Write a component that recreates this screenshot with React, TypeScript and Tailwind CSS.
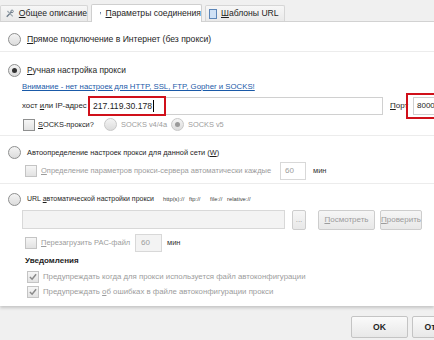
import React from 'react';

const font = { fontFamily: '"Liberation Sans", Arial, sans-serif' };

const Radio = ({ checked = false, disabled = false }: { checked?: boolean; disabled?: boolean }) => (
  <span
    className={`inline-flex h-[13px] w-[13px] shrink-0 items-center justify-center rounded-full border bg-gradient-to-b from-[#f4f4f4] to-[#dcdcdc] ${
      disabled ? 'border-[#c8c8c8]' : 'border-[#8e8f8f]'
    }`}
  >
    {checked && <span className={`h-[5px] w-[5px] rounded-full ${disabled ? 'bg-[#9a9a9a]' : 'bg-[#333]'}`} />}
  </span>
);

const Check = ({ checked = false, disabled = false }: { checked?: boolean; disabled?: boolean }) => (
  <span
    className={`inline-flex h-[12px] w-[12px] shrink-0 items-center justify-center border bg-gradient-to-b from-[#f6f6f6] to-[#e2e2e2] ${
      disabled ? 'border-[#c4c4c4]' : 'border-[#8e8f8f]'
    }`}
  >
    {checked && (
      <svg width="8" height="8" viewBox="0 0 9 9">
        <path d="M1 4.5 L3.5 7 L8 1.5" fill="none" stroke={disabled ? '#8a8a8a' : '#333'} strokeWidth="1.7" />
      </svg>
    )}
  </span>
);

const Btn = ({ children, className = '' }: { children: React.ReactNode; className?: string }) => (
  <span
    className={`inline-flex h-[20px] shrink-0 items-center justify-center rounded-[2px] border border-[#cdcdcd] bg-gradient-to-b from-[#f6f6f6] to-[#e8e8e8] text-[8px] text-[#9c9c9c] ${className}`}
  >
    {children}
  </span>
);

const U = ({ children }: { children: React.ReactNode }) => <span className="underline">{children}</span>;

export default function App() {
  return (
    <div className="h-[340px] w-[434px] overflow-hidden whitespace-nowrap bg-[#f0f0f0] text-[8px] text-[#1e1e1e]" style={font}>
      {/* tabs */}
      <div className="flex h-[22px] items-end border-b border-[#d4d4d4] text-[8.6px]">
        <div className="flex h-[16px] w-[88px] shrink-0 items-center gap-[5px] rounded-t-[2px] border border-b-0 border-[#d6d6d6] bg-gradient-to-b from-[#f7f7f7] to-[#e9e9e9] pl-[5px]">
          <svg width="11" height="11" viewBox="0 0 11 11">
            <path d="M1 10 L8 3" stroke="#6b7a88" strokeWidth="1.8" />
            <path d="M2 2 L9.5 9.5" stroke="#9aa4ac" strokeWidth="1.6" />
            <circle cx="8.5" cy="2.5" r="1.8" fill="none" stroke="#6b7a88" strokeWidth="1.2" />
          </svg>
          <span><U>О</U>бщее описание</span>
        </div>
        <div className="relative top-[1px] ml-[3px] flex h-[18px] w-[111px] shrink-0 items-center gap-[4px] rounded-t-[2px] border border-b-0 border-[#cfcfcf] bg-white pl-[8px]">
          <svg width="10" height="11" viewBox="0 0 10 11">
            <rect x="0.5" y="0.5" width="9" height="8" fill="#8ea6c4" stroke="#4f6b91" />
            <rect x="2" y="2" width="6" height="4" fill="#dfe8f3" />
            <rect x="1" y="9" width="8" height="2" fill="#6f7f90" />
          </svg>
          <span><U>П</U>араметры соединения</span>
        </div>
        <div className="ml-[3px] flex h-[16px] w-[80px] shrink-0 items-center gap-[4px] rounded-t-[2px] border border-b-0 border-[#d6d6d6] bg-gradient-to-b from-[#f7f7f7] to-[#e9e9e9] pl-[3px]">
          <svg width="8" height="10" viewBox="0 0 8 10">
            <rect x="0.5" y="0.5" width="7" height="9" fill="#cfe1f5" stroke="#5d86b8" />
          </svg>
          <span><U>Ш</U>аблоны URL</span>
        </div>
      </div>

      {/* content */}
      <div className="flex h-[284px] flex-col bg-white shadow-[0_2px_3px_rgba(0,0,0,0.18)]">
        <div className="flex h-[30px] items-end border-b border-[#ececec] pb-[5px] pl-[8px]">
          <div className="flex h-[13px] items-center gap-[6px] text-[8.6px]">
            <Radio />
            <span><U>П</U>рямое подключение в Интернет (без прокси)</span>
          </div>
        </div>

        <div className="flex h-[84px] flex-col border-b border-[#ececec] pl-[8px] pt-[12px]">
          <div className="flex h-[13px] items-center gap-[6px] text-[8.4px]">
            <Radio checked />
            <span><U>Р</U>учная настройка прокси</span>
          </div>
          <div className="mt-[3px] h-[14px] pl-[14px] text-[7.8px] leading-[14px] text-[#1a5aa8] underline">
            Внимание - нет настроек для HTTP, SSL, FTP, Gopher и SOCKS!
          </div>
          <div className="mt-[3px] flex h-[18px] items-center pl-[14px]">
            <span className="w-[66px] shrink-0 text-[7.8px]"><span>хост <U>и</U>ли IP-адрес</span></span>
            <div className="relative flex h-[18px] w-[295px] shrink-0 items-center border border-[#d0d0d0] pl-[4px] text-[8.6px]">
              217.119.30.178
              <span className="ml-[1px] h-[12px] w-[1px] bg-black" />
              <span className="absolute left-[-1px] top-[-2px] h-[20px] w-[78px] border-2 border-[#d0101a]" />
            </div>
            <span className="ml-[7px] w-[16px] shrink-0"><U>П</U>орт</span>
            <div className="relative ml-[7px] flex h-[18px] flex-1 items-center border border-r-0 border-[#d0d0d0] pl-[3px] text-[8px]">
              8000
              <span className="absolute left-[-8px] top-[-5px] h-[26px] w-[40px] border-2 border-[#d0101a]" />
            </div>
          </div>
          <div className="mt-[1px] flex h-[17px] items-center pl-[15px] text-[7.4px]">
            <Check />
            <span className="ml-[3px] w-[66px] shrink-0"><U>S</U>OCKS-прокси?</span>
            <Radio disabled />
            <span className="ml-[4px] w-[50px] shrink-0 text-[#9c9c9c]">SOCKS v4/4a</span>
            <Radio checked disabled />
            <span className="ml-[4px] text-[#9c9c9c]">SOCKS v5</span>
          </div>
        </div>

        <div className="flex h-[48px] flex-col border-b border-[#ececec] pl-[8px] pt-[10px]">
          <div className="flex h-[13px] items-center gap-[6px] text-[7.4px]">
            <Radio />
            <span>Автоопределение настроек прокси для данной сети (<U>W</U>)</span>
          </div>
          <div className="mt-[2px] flex h-[19px] items-center pl-[17px] text-[#9c9c9c]">
            <Check disabled />
            <span className="ml-[4px] w-[239px] shrink-0 text-[7.5px]"><U>О</U>пределение параметров прокси-сервера автоматически каждые</span>
            <span className="flex h-[18px] w-[26px] shrink-0 items-center border border-[#d8d8d8] pl-[4px]">60</span>
            <span className="ml-[7px] text-[7.5px] text-[#333]">мин</span>
          </div>
        </div>

        <div className="flex flex-1 flex-col pl-[8px] pt-[9px]">
          <div className="flex h-[13px] items-center">
            <Radio />
            <span className="ml-[6px] w-[136px] shrink-0 text-[7px]">URL <U>а</U>втоматической настройки прокси</span>
            <span className="text-[5.8px] text-[#444]">http(s)://&nbsp;&nbsp;&nbsp;ftp://&nbsp;&nbsp;&nbsp;&nbsp;&nbsp;&nbsp;file://&nbsp;&nbsp;&nbsp;relative://</span>
          </div>
          <div className="mt-[3px] flex h-[21px] items-center pl-[14px]">
            <span className="h-[19px] w-[263px] shrink-0 border border-[#d8d8d8] bg-[#f3f3f3]" />
            <Btn className="ml-[7px] w-[14px]">...</Btn>
            <Btn className="ml-[12px] w-[57px]"><span><U>П</U>осмотреть</span></Btn>
            <Btn className="ml-[5px] w-[42px]"><span><U>П</U>роверить</span></Btn>
          </div>
          <div className="mt-[2px] flex h-[21px] items-center pl-[17px] text-[7.5px] text-[#9c9c9c]">
            <Check disabled />
            <span className="ml-[4px] w-[94px] shrink-0"><U>П</U>ерезагрузить PAC-файл</span>
            <span className="flex h-[18px] w-[27px] shrink-0 items-center border border-[#d8d8d8] bg-[#f3f3f3] pl-[5px] text-[8px]">60</span>
            <span className="ml-[5px] text-[#333]">мин</span>
          </div>
          <div className="mt-[1px] h-[14px] pl-[17px] font-bold leading-[14px]">Уведомления</div>
          <div className="mt-[1px] flex h-[15px] items-center gap-[4px] pl-[19px] text-[7.8px] text-[#9c9c9c]">
            <Check checked disabled />
            <span>Предупреждать когда для прокси используется файл автоконфигурации</span>
          </div>
          <div className="flex h-[15px] items-center gap-[4px] pl-[19px] text-[7.8px] text-[#9c9c9c]">
            <Check checked disabled />
            <span>Предупреждать <U>о</U>б ошибках в файле автоконфигурации прокси</span>
          </div>
        </div>
      </div>

      {/* footer */}
      <div className="mt-[10px] flex gap-[4px] pl-[351px]">
        <span className="flex h-[22px] w-[57px] shrink-0 items-center justify-center rounded-[2px] border border-[#c4c4c4] bg-gradient-to-b from-[#fafafa] to-[#e8e8e8] text-[8.6px] font-bold">OK</span>
        <span className="flex h-[22px] w-[57px] shrink-0 items-center justify-center rounded-[2px] border border-[#c4c4c4] bg-gradient-to-b from-[#fafafa] to-[#e8e8e8] text-[8.6px] font-bold">Отмена</span>
      </div>
    </div>
  );
}
